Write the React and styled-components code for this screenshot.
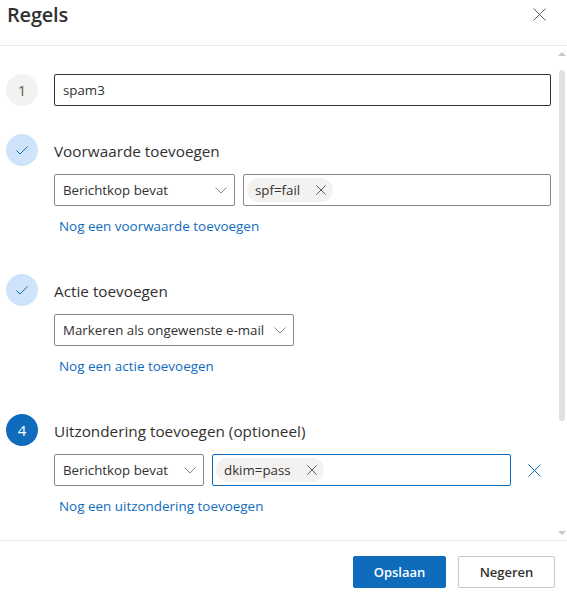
import { createGlobalStyle } from "styled-components";
import styled from "styled-components";

const Global = createGlobalStyle`
  html, body { margin: 0; padding: 0; background: #fff; }
  * { box-sizing: border-box; }
`;

const Dialog = styled.div`
  width: 567px;
  height: 595px;
  display: flex;
  flex-direction: column;
  overflow: hidden;
  font-family: "Open Sans", "Noto Sans", sans-serif;
  font-size: 13.3px;
  color: #323130;
`;

const Header = styled.header`
  height: 46px;
  flex: none;
  display: flex;
  justify-content: space-between;
  padding: 0 21px 0 7px;
  border-bottom: 1px solid #edebe9;
`;

const Title = styled.h1`
  margin: 0;
  font-size: 20px;
  font-weight: 600;
  line-height: 30px;
  letter-spacing: -0.2px;
`;

const IconButton = styled.button`
  border: none;
  background: none;
  padding: 0;
  display: flex;
  color: ${(p) => p.$color || "#605e5c"};
`;

const CloseButton = styled(IconButton)`
  margin-top: 8px;
  height: 13px;
`;

const Body = styled.div`
  flex: 1;
  min-height: 0;
  display: flex;
`;

const Content = styled.div`
  flex: 1;
  padding: 28px 0 0 6px;
  display: flex;
  flex-direction: column;
`;

const Scrollbar = styled.div`
  width: 8px;
  margin-right: 1px;
  padding: 6px 0 5px;
  display: flex;
  flex-direction: column;
  align-items: center;
`;

const Arrow = styled.div`
  flex: none;
  width: 0;
  height: 0;
  border-left: 4px solid transparent;
  border-right: 4px solid transparent;
  ${(p) => (p.$down ? "border-top: 4px solid #c8c8c8;" : "border-bottom: 4px solid #c8c8c8;")}
`;

const Thumb = styled.div`
  width: 6px;
  height: 351px;
  margin-top: 14px;
  margin-bottom: auto;
  border-radius: 3px;
  background: #e1e1e1;
`;

const Step = styled.section`
  display: grid;
  grid-template-columns: 32px 1fr;
  column-gap: 16px;
  margin-bottom: ${(p) => p.$gap || 0}px;
`;

const Badge = styled.div`
  width: 32px;
  height: 32px;
  border-radius: 50%;
  display: flex;
  align-items: center;
  justify-content: center;
  font-size: 15px;
  background: ${(p) => (p.$state === "done" ? "#cfe4fa" : p.$state === "active" ? "#0f6cbd" : "#f3f2f1")};
  color: ${(p) => (p.$state === "done" ? "#0f6cbd" : p.$state === "active" ? "#fff" : "#605e5c")};
`;

const StepTitle = styled.h2`
  margin: 0;
  height: 32px;
  font-size: 15.3px;
  font-weight: 400;
  line-height: 35px;
  white-space: nowrap;
`;

const StepBody = styled.div`
  grid-column: 2;
  margin-top: 8px;
`;

const Row = styled.div`
  display: flex;
  align-items: center;
  gap: 8px;
`;

const TextInput = styled.div`
  width: 497px;
  height: 32px;
  display: flex;
  align-items: center;
  padding: 0 8px;
  border: 1px solid #323130;
  border-radius: 2px;
`;

const Select = styled.div`
  width: ${(p) => p.$width}px;
  height: 32px;
  flex: none;
  display: flex;
  align-items: center;
  justify-content: space-between;
  padding: 0 7px 0 8px;
  border: 1px solid #8a8886;
  border-radius: 2px;
  white-space: nowrap;
`;

const TagInput = styled.div`
  width: ${(p) => p.$width}px;
  height: 32px;
  flex: none;
  display: flex;
  align-items: center;
  padding: 0 3px;
  border: 1px solid ${(p) => (p.$focus ? "#0f6cbd" : "#8a8886")};
  border-radius: 2px;
`;

const Tag = styled.span`
  height: 24px;
  display: inline-flex;
  align-items: center;
  gap: 16px;
  padding: 0 7px 0 8px;
  border-radius: 12px;
  background: #f3f2f1;
`;

const RemoveRow = styled(IconButton)`
  margin-left: 9px;
`;

const AddLink = styled.a`
  display: block;
  margin: 10px 0 0 5px;
  height: 20px;
  line-height: 20px;
  font-size: 13.45px;
  color: #0f6cbd;
`;

const Footer = styled.footer`
  height: 55px;
  flex: none;
  display: flex;
  justify-content: flex-end;
  gap: 12px;
  padding: 15px 12px 0 0;
  border-top: 1px solid #edebe9;
`;

const Button = styled.button`
  width: ${(p) => p.$width}px;
  height: 32px;
  border-radius: 2px;
  border: 1px solid ${(p) => (p.$primary ? "#0f6cbd" : "#c8c6c4")};
  background: ${(p) => (p.$primary ? "#0f6cbd" : "#fff")};
  color: ${(p) => (p.$primary ? "#fff" : "#323130")};
  font-family: inherit;
  font-size: 13px;
  font-weight: 600;
`;

const Cross = ({ size = 10 }) => (
  <svg width={size} height={size} viewBox="0 0 12 12" fill="none" stroke="currentColor" strokeWidth={12 / size}>
    <path d="M0.5 0.5 L11.5 11.5 M11.5 0.5 L0.5 11.5" />
  </svg>
);

const Chevron = () => (
  <svg width="12" height="7" viewBox="0 0 12 7" fill="none" stroke="#8a8886" strokeWidth="1">
    <path d="M0.5 0.5 L6 6 L11.5 0.5" />
  </svg>
);

const Check = () => (
  <svg width="12" height="9" viewBox="0 0 12 9" fill="none" stroke="currentColor" strokeWidth="1">
    <path d="M0.5 4.5 L4 8 L11.5 0.5" />
  </svg>
);

const App = () => {
  return (
    <>
      <Global />
      <Dialog>
        <Header>
          <Title>Regels</Title>
          <CloseButton><Cross size={13} /></CloseButton>
        </Header>
        <Body>
          <Content>
            <Step $gap={28}>
              <Badge>1</Badge>
              <TextInput>spam3</TextInput>
            </Step>

            <Step $gap={38}>
              <Badge $state="done"><Check /></Badge>
              <StepTitle>Voorwaarde toevoegen</StepTitle>
              <StepBody>
                <Row>
                  <Select $width={181}>Berichtkop bevat <Chevron /></Select>
                  <TagInput $width={308}>
                    <Tag>spf=fail <IconButton><Cross /></IconButton></Tag>
                  </TagInput>
                </Row>
                <AddLink>Nog een voorwaarde toevoegen</AddLink>
              </StepBody>
            </Step>

            <Step $gap={38}>
              <Badge $state="done"><Check /></Badge>
              <StepTitle>Actie toevoegen</StepTitle>
              <StepBody>
                <Select $width={240}>Markeren als ongewenste e-mail <Chevron /></Select>
                <AddLink>Nog een actie toevoegen</AddLink>
              </StepBody>
            </Step>

            <Step>
              <Badge $state="active">4</Badge>
              <StepTitle>Uitzondering toevoegen (optioneel)</StepTitle>
              <StepBody>
                <Row>
                  <Select $width={150}>Berichtkop bevat <Chevron /></Select>
                  <TagInput $width={299} $focus>
                    <Tag>dkim=pass <IconButton><Cross /></IconButton></Tag>
                  </TagInput>
                  <RemoveRow $color="#0f6cbd"><Cross size={13} /></RemoveRow>
                </Row>
                <AddLink>Nog een uitzondering toevoegen</AddLink>
              </StepBody>
            </Step>
          </Content>
          <Scrollbar>
            <Arrow />
            <Thumb />
            <Arrow $down />
          </Scrollbar>
        </Body>
        <Footer>
          <Button $primary $width={93}>Opslaan</Button>
          <Button $width={97}>Negeren</Button>
        </Footer>
      </Dialog>
    </>
  );
};

export default App;
